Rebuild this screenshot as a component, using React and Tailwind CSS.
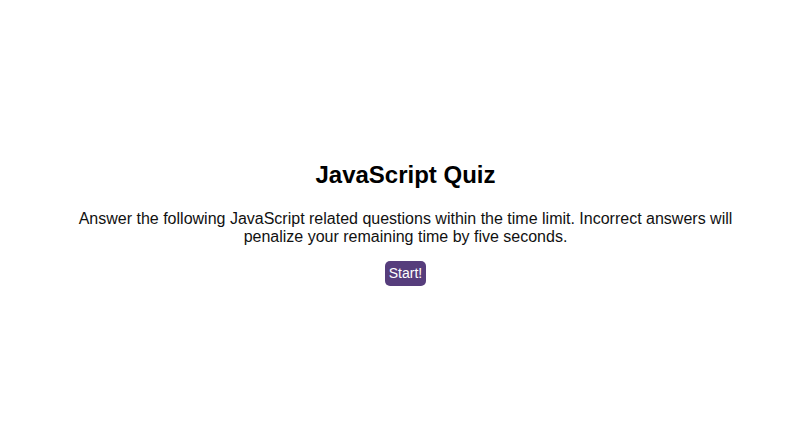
import React from 'react';

const App = () => {
  return (
    <div className="min-h-[426px] bg-white pl-4 font-['Liberation_Sans',Arial,sans-serif] text-black">
      <div className="mx-auto flex w-[680px] flex-col items-center pt-[161px] text-center">
        <h1 className="text-[24px] font-bold leading-[27.6px]">JavaScript Quiz</h1>
        <p className="mt-[21px] text-[16px] leading-[18.4px] text-[#111]">
          Answer the following JavaScript related questions within the time limit. Incorrect answers will penalize your remaining time by five seconds.
        </p>
        <button
          type="button"
          className="mt-[15px] rounded-[5px] bg-[#563d7c] px-1 py-1 text-[14px] leading-[17px] text-white"
        >
          Start!
        </button>
      </div>
    </div>
  );
};

export default App;
